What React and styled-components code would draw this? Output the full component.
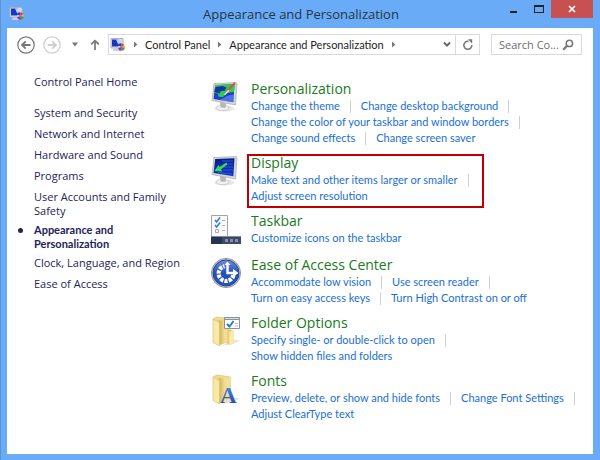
import styled, { createGlobalStyle } from "styled-components";

const categories = [
  { name: "System and Security" },
  { name: "Network and Internet" },
  { name: "Hardware and Sound" },
  { name: "Programs" },
  { name: "User Accounts and Family Safety", twoLines: true },
  { name: "Appearance and Personalization", twoLines: true, current: true },
  { name: "Clock, Language, and Region" },
  { name: "Ease of Access" },
];

const sections = [
  {
    title: "Personalization",
    Icon: PersonalizationIcon,
    tasks: [
      "Change the theme",
      "Change desktop background",
      "Change the color of your taskbar and window borders",
      "Change sound effects",
      "Change screen saver",
    ],
  },
  {
    title: "Display",
    Icon: DisplayIcon,
    marked: true,
    tasks: ["Make text and other items larger or smaller", "Adjust screen resolution"],
  },
  { title: "Taskbar", Icon: TaskbarIcon, tasks: ["Customize icons on the taskbar"] },
  {
    title: "Ease of Access Center",
    Icon: EaseIcon,
    tasks: [
      "Accommodate low vision",
      "Use screen reader",
      "Turn on easy access keys",
      "Turn High Contrast on or off",
    ],
  },
  {
    title: "Folder Options",
    Icon: FolderOptionsIcon,
    tasks: ["Specify single- or double-click to open", "Show hidden files and folders"],
  },
  {
    title: "Fonts",
    Icon: FontsIcon,
    tasks: [
      "Preview, delete, or show and hide fonts",
      "Change Font Settings",
      "Adjust ClearType text",
    ],
  },
];

export default function App() {
  return (
    <>
      <GlobalStyle />
      <Window>
        <TitleBar>
          <ControlPanelIcon />
          <WindowTitle>Appearance and Personalization</WindowTitle>
          <WindowButtons>
            <WindowButton aria-label="Minimize">
              <svg width="8" height="10"><path d="M0 7h7v2H0z" fill="#222" /></svg>
            </WindowButton>
            <WindowButton aria-label="Maximize">
              <svg width="10" height="10"><path d="M0 1h10v8H0zM1 3v5h8V3z" fillRule="evenodd" fill="#222" /></svg>
            </WindowButton>
            <WindowButton $close aria-label="Close">
              <svg width="8" height="8"><path d="M1 1l6 6M7 1l-6 6" stroke="#fff" strokeWidth="1.7" /></svg>
            </WindowButton>
          </WindowButtons>
        </TitleBar>
        <Client>
          <NavBar>
            <NavButtons>
              <NavButton aria-label="Back"><RoundArrow color="#777" /></NavButton>
              <NavButton aria-label="Forward"><RoundArrow color="#cfcfcf" flip /></NavButton>
              <NavButton $small aria-label="Recent pages">
                <svg width="8" height="5"><path d="M1 0.5h6L4 4.5z" fill="#777" /></svg>
              </NavButton>
              <NavButton $small aria-label="Up">
                <svg width="10" height="12" fill="none" stroke="#777" strokeWidth="1.7">
                  <path d="M5 11V1.5M1.2 5.4L5 1.6l3.8 3.8" />
                </svg>
              </NavButton>
            </NavButtons>
            <AddressBar>
              <ControlPanelIcon />
              <Chevron />
              <Crumb href="#control-panel">Control Panel</Crumb>
              <Chevron />
              <Crumb href="#appearance">Appearance and Personalization</Crumb>
              <Chevron />
              <AddressButton $push aria-label="Previous locations">
                <svg width="8" height="7"><path d="M1 1.5l3 3.2 3-3.2" fill="none" stroke="#666" strokeWidth="1.9" /></svg>
              </AddressButton>
              <AddressButton $divider aria-label="Refresh">
                <svg width="12" height="12">
                  <path d="M6.6 2.4A4 4 0 1 0 9.8 6" fill="none" stroke="#777" strokeWidth="1.5" />
                  <path d="M6 0.2h4.2v4.6z" fill="#777" />
                </svg>
              </AddressButton>
            </AddressBar>
            <SearchBox>
              <SearchInput aria-label="Search Control Panel" placeholder="Search Co..." />
              <svg width="12" height="12" fill="none" stroke="#777">
                <circle cx="7.4" cy="4.4" r="3.2" strokeWidth="1.5" />
                <path d="M5 6.8L1.2 10.8" strokeWidth="2.2" />
              </svg>
            </SearchBox>
          </NavBar>
          <Content>
            <Sidebar>
              <SideLink href="#home">Control Panel Home</SideLink>
              <CategoryList>
                {categories.map(({ name, twoLines, current }) => (
                  <Category key={name} $twoLines={twoLines} $current={current}>
                    <SideLink href="#category" aria-current={current ? "page" : undefined}>{name}</SideLink>
                  </Category>
                ))}
              </CategoryList>
            </Sidebar>
            <Main>
              {sections.map(({ title, Icon, marked, tasks }) => (
                <Section key={title}>
                  <Icon />
                  <SectionBody $marked={marked}>
                    <SectionTitle><a href="#section">{title}</a></SectionTitle>
                    <TaskList>
                      {tasks.map((task) => (
                        <Task key={task}><a href="#task">{task}</a></Task>
                      ))}
                    </TaskList>
                  </SectionBody>
                </Section>
              ))}
            </Main>
          </Content>
        </Client>
      </Window>
    </>
  );
}

function ControlPanelIcon() {
  return (
    <svg width="16" height="14" viewBox="0 0 16 14" aria-hidden="true">
      <path d="M1 .5h12v9.500H1z" fill="#dfe2ea" stroke="#aab2c2" />
      <path d="M2 1.500h6.500v7H2z" fill="#1636c4" />
      <path d="M6 1.500h5.500v3.500L8 6z" fill="#c3d2f5" />
      <path d="M3.500 10.500h6l1.500 2.500H3z" fill="#c9ccd3" />
      <path d="M11.500 9L7.600 7.200A3.600 3.600 0 0 1 11 5.200z" fill="#2a3fd0" />
      <path d="M11.500 9L11 5.200a3.800 3.800 0 0 1 3.300 1.800z" fill="#e23b35" />
      <path d="M11.500 9l2.800-2a3.800 3.800 0 0 1 .6 3z" fill="#f2ad28" />
      <path d="M11.500 9l3.400 1a3.600 3.600 0 0 1-3 2.800z" fill="#35a845" />
      <path d="M11.500 9l.4 3.800a3.800 3.800 0 0 1-3.900-2.600z" fill="#9a32b0" />
    </svg>
  );
}

function RoundArrow({ color, flip }) {
  return (
    <svg width="18" height="18" viewBox="0 0 18 18" fill="none" stroke={color}>
      <circle cx="9" cy="9" r="8.2" strokeWidth="1.2" />
      <path d={flip ? "M4.5 9h8M9.3 5.3L13 9l-3.7 3.7" : "M13.5 9h-8M8.7 5.3L5 9l3.7 3.7"} strokeWidth="1.8" />
    </svg>
  );
}

function Chevron() {
  return (
    <svg width="5" height="7" aria-hidden="true"><path d="M1 0.5v6L4.4 3.5z" fill="#777" /></svg>
  );
}

function Monitor({ gradient, from, to, children }) {
  return (
    <svg width="32" height="32" viewBox="0 0 32 32" aria-hidden="true">
      <defs>
        <linearGradient id={gradient} x1="0" y1="0" x2="0" y2="1">
          <stop offset="0" stopColor={from} />
          <stop offset="1" stopColor={to} />
        </linearGradient>
      </defs>
      <ellipse cx="13.500" cy="26.500" rx="10" ry="3" fill="#e6e6e6" />
      <ellipse cx="11.500" cy="26" rx="6.500" ry="2.600" fill="#f2f2f2" stroke="#bdbdbd" strokeWidth=".7" />
      <path d="M9 20l6 1.500-.5 4.500-5-.5z" fill="#b8b8b8" />
      <path d="M3 1.500L25 .6l1 .8L24.500 23 1 18.500z" fill="#d4d6d8" stroke="#a6a9ac" strokeWidth=".7" />
      <path d="M4.200 3L23.500 2.200 22.400 20.200 2.600 17z" fill={`url(#${gradient})`} />
      {children}
    </svg>
  );
}

function PersonalizationIcon() {
  return (
    <Monitor gradient="personalize" from="#1c3cb4" to="#1d40d2">
      <path d="M4.200 3L23.500 2.200l-.5 7.800-7 1-4 4-4.500-.3-.5-3-3.700-1.200z" fill="#36c84b" />
      <path d="M4.500 5l7-1 4 1.500-2 3.500-3.500 0-1.500 2.500L3.500 10z" fill="#1535a8" />
      <path d="M8 17.900l14.400 2.300.5-7.500c-6-.5-8.500 3-14.900 5.200z" fill="#6f94ee" opacity=".6" />
      <path d="M24 .8L16 9" stroke="#d45142" strokeWidth="1.800" />
      <path d="M17.500 7.500L13 12.400l1 .8 4.500-4.200z" fill="#e6ddcd" />
    </Monitor>
  );
}

function DisplayIcon() {
  return (
    <Monitor gradient="display" from="#061d86" to="#1437cc">
      <path d="M11 5h11M12 8h10M13 11h9M12 14h10M7 16.500l14 1.500" stroke="#2c5ad6" fill="none" />
      <path d="M15.500 6.500L8.500 11 7.500 9 3.500 15l8 .5-1.500-2.300 6.500-4.700z" fill="#36dc55" />
    </Monitor>
  );
}

function TaskbarIcon() {
  return (
    <svg width="32" height="32" viewBox="0 0 32 32" aria-hidden="true">
      <path d="M.5 1.500h16v21H.5z" fill="#fafafa" stroke="#a5a5a5" />
      <path d="M11 6.500h3M11 11.500h3M11 16.500h3" stroke="#a9b4bd" />
      <path d="M4 6l1.600 2L9 3.500M4 11l1.600 2L9 8.500" fill="none" stroke="#2b7fcb" strokeWidth="1.500" />
      <path d="M4.500 15.500h3v3h-3z" fill="none" stroke="#aaa" />
      <path d="M0 22h30v8H0z" fill="#3d4967" />
      <path d="M0 22h30v1H0z" fill="#7d88a2" />
      <path d="M0 23h11v7H0z" fill="#28334e" />
      <path d="M14 25h3v3h-3zM19 25h3v3h-3zM24 25h3v3h-3z" fill="#8390ac" />
    </svg>
  );
}

function EaseIcon() {
  return (
    <svg width="32" height="32" viewBox="0 0 32 32" aria-hidden="true">
      <defs>
        <linearGradient id="ease" x1="0" y1="0" x2="0" y2="1">
          <stop offset="0" stopColor="#6f8fdb" />
          <stop offset=".5" stopColor="#2450b5" />
          <stop offset="1" stopColor="#2555c4" />
        </linearGradient>
      </defs>
      <circle cx="15" cy="15" r="14.600" fill="#c3c7d2" stroke="#7c8191" strokeWidth=".8" />
      <circle cx="15" cy="15" r="13" fill="url(#ease)" stroke="#274688" />
      {/* the ring runs clockwise from three o'clock to twelve */}
      <path
        d="M22.500 17a7.500 7.500 0 1 1-9-8.800"
        fill="none"
        stroke="#fff"
        strokeWidth="4.200"
        strokeDasharray="3.200 1.100"
      />
      <path d="M16.500 6v9h6" fill="none" stroke="#fff" strokeWidth="2.400" />
      <path d="M13.500 7l3-3.500 3 3.500zM22 11l5.500 4-5.500 4z" fill="#fff" />
    </svg>
  );
}

function Folder({ gradient }) {
  return (
    <>
      <defs>
        <linearGradient id={gradient} x1="0" y1="0" x2="1" y2="0">
          <stop offset="0" stopColor="#cfae55" />
          <stop offset=".5" stopColor="#f0dc92" />
          <stop offset="1" stopColor="#f5e39c" />
        </linearGradient>
      </defs>
      <path d="M18 23l11 1.500-8 4-8 1z" fill="#cfcfcf" opacity=".6" />
      <path d="M2 3L6 .8l4 .7 9.500 1.500v21.500L8 29z" fill="#efda90" stroke="#d3b75f" strokeWidth=".5" />
      <path d="M7.500 4.500L19.500 3v22L8 29z" fill={`url(#${gradient})`} />
      <path d="M2 3l6.500 3.500v23.500L2 26.500z" fill="#f8e9a6" stroke="#d7bd68" strokeWidth=".6" />
    </>
  );
}

function FolderOptionsIcon() {
  return (
    <svg width="32" height="32" viewBox="0 0 32 32" aria-hidden="true">
      <Folder gradient="options-fold" />
      <path d="M16 13l6.500 1.500v12.500l-4 1.500-2.500-1z" fill="#ebd07a" />
      <path d="M18.500 16l4-1.500v12.500l-4 1.500z" fill="#f9eca9" />
      <path d="M13.500 1.500h15v11h-15z" fill="#fff" stroke="#8d9398" />
      <path d="M13.500 1.500h15v2h-15z" fill="#d3d8dc" stroke="#8d9398" />
      <path d="M16 8l2.500 2.500L22.500 5" fill="none" stroke="#1e7cc5" strokeWidth="1.800" />
      <path d="M24 7.500h3M24 10h3" stroke="#bbb" />
    </svg>
  );
}

function FontsIcon() {
  return (
    <svg width="32" height="32" viewBox="0 0 32 32" overflow="visible" aria-hidden="true">
      <defs>
        <linearGradient id="letter" x1="0" y1="0" x2="0" y2="1">
          <stop offset="0" stopColor="#5a94e6" />
          <stop offset="1" stopColor="#173e9f" />
        </linearGradient>
      </defs>
      <Folder gradient="fonts-fold" />
      <text x="9" y="29" fontFamily="Liberation Serif, serif" fontSize="23" fontWeight="bold" fill="url(#letter)">A</text>
    </svg>
  );
}

const GlobalStyle = createGlobalStyle`
  *, *::before, *::after {
    box-sizing: border-box;
  }
  body {
    margin: 0;
    font-family: "Open Sans", "Noto Sans", sans-serif;
    font-size: 11px;
    line-height: 16px;
  }
  a {
    color: inherit;
    text-decoration: none;
  }
  button {
    display: flex;
    align-items: center;
    justify-content: center;
    padding: 0;
    border: 0;
    background: none;
  }
  svg {
    flex: none;
  }
`

const Window = styled.div`
  min-height: 100vh;
  display: flex;
  flex-direction: column;
  padding: 0 7px 6px 6px;
  background: #6aabf7;
  border-left: 1px solid #5a92d4;
`

const TitleBar = styled.header`
  height: 28px;
  display: grid;
  grid-template-columns: 1fr auto 1fr;
  align-items: center;
  padding-left: 2px;
`

const WindowTitle = styled.h1`
  margin: 0;
  font-size: 13px;
  font-weight: 400;
  line-height: 28px;
  color: #263545;
`

const WindowButtons = styled.div`
  align-self: start;
  display: flex;
  justify-content: flex-end;
`

const WindowButton = styled.button`
  width: ${props => props.$close ? "42px" : "25px"};
  height: 18px;
  background: ${props => props.$close ? "#c75050" : "transparent"};
`

const Client = styled.div`
  flex: 1;
  background: #fff;
`

const NavBar = styled.nav`
  display: flex;
  align-items: center;
  padding: 6px 11px 0 10px;
`

const NavButtons = styled.div`
  display: flex;
  align-items: center;
  gap: 8px;
  margin-right: 7px;
`

const NavButton = styled.button`
  width: ${props => props.$small ? "12px" : "18px"};
  height: 18px;
`

const AddressBar = styled.div`
  flex: 1;
  height: 21px;
  display: flex;
  align-items: center;
  gap: 7px;
  padding-left: 1px;
  border: 1px solid #dadada;
  font-family: Lato, "Open Sans", sans-serif;
  color: #1e1e1e;
`

const Crumb = styled.a`
  white-space: nowrap;
`

const AddressButton = styled.button`
  width: ${props => props.$divider ? "24px" : "16px"};
  height: 19px;
  margin-left: ${props => props.$push ? "auto" : "-7px"};
  border-left: ${props => props.$divider ? "1px solid #dadada" : "0"};
`

const SearchBox = styled.div`
  width: 91px;
  height: 21px;
  display: flex;
  align-items: center;
  margin-left: 11px;
  padding: 0 7px;
  border: 1px solid #dadada;
`

const SearchInput = styled.input`
  flex: 1;
  min-width: 0;
  padding: 0;
  border: 0;
  outline: 0;
  font: inherit;

  &::placeholder {
    color: #6d6d6d;
    opacity: 1;
  }
`

const Content = styled.div`
  display: flex;
`

const Sidebar = styled.aside`
  width: 204px;
  flex: none;
  padding: 20px 24px 0 27px;
  line-height: 14px;
  color: #1e2459;
`

const SideLink = styled.a`
  display: block;
`

const CategoryList = styled.ul`
  display: flex;
  flex-direction: column;
  gap: 7px;
  margin: 17px 0 0;
  padding: 0;
  list-style: none;
`

const Category = styled.li`
  position: relative;
  max-width: ${props => props.$twoLines ? "136px" : "none"};
  margin-bottom: ${props => props.$twoLines ? "-2px" : "0"};
  padding-right: ${props => props.$current ? "24px" : "0"};
  font-family: ${props => props.$current ? 'Lato, "Open Sans", sans-serif' : "inherit"};
  font-weight: ${props => props.$current ? 700 : 400};
  white-space: ${props => props.$twoLines ? "normal" : "nowrap"};

  &::before {
    content: "";
    display: ${props => props.$current ? "block" : "none"};
    position: absolute;
    top: 5px;
    left: -16px;
    width: 5px;
    height: 5px;
    border-radius: 50%;
    background: #1e2459;
  }
`

const Main = styled.main`
  flex: 1;
  min-width: 0;
  padding: 24px 8px 0 0;
`

const Section = styled.section`
  display: flex;
  gap: 8px;
  min-height: 44px;
  padding-bottom: 7px;

  > svg {
    margin-top: 3px;
  }
`

const SectionBody = styled.div`
  position: relative;
  flex: 1;

  &::after {
    content: "";
    display: ${props => props.$marked ? "block" : "none"};
    position: absolute;
    top: 1px;
    left: -4px;
    width: 237px;
    height: 54px;
    border: 2px solid #c00000;
    pointer-events: none;
  }
`

const SectionTitle = styled.h2`
  margin: 0;
  font-size: 14px;
  font-weight: 400;
  line-height: 19px;
  color: #217a21;
`

const TaskList = styled.ul`
  display: flex;
  flex-wrap: wrap;
  margin: 0;
  padding: 0;
  list-style: none;
  font-family: Lato, "Open Sans", sans-serif;
  color: #1a6fd4;
`

const Task = styled.li`
  display: flex;
  align-items: center;
  white-space: nowrap;

  &:not(:last-child)::after {
    content: "";
    width: 1px;
    height: 13px;
    margin: 0 10px;
    background: #d0d0d0;
  }
`
